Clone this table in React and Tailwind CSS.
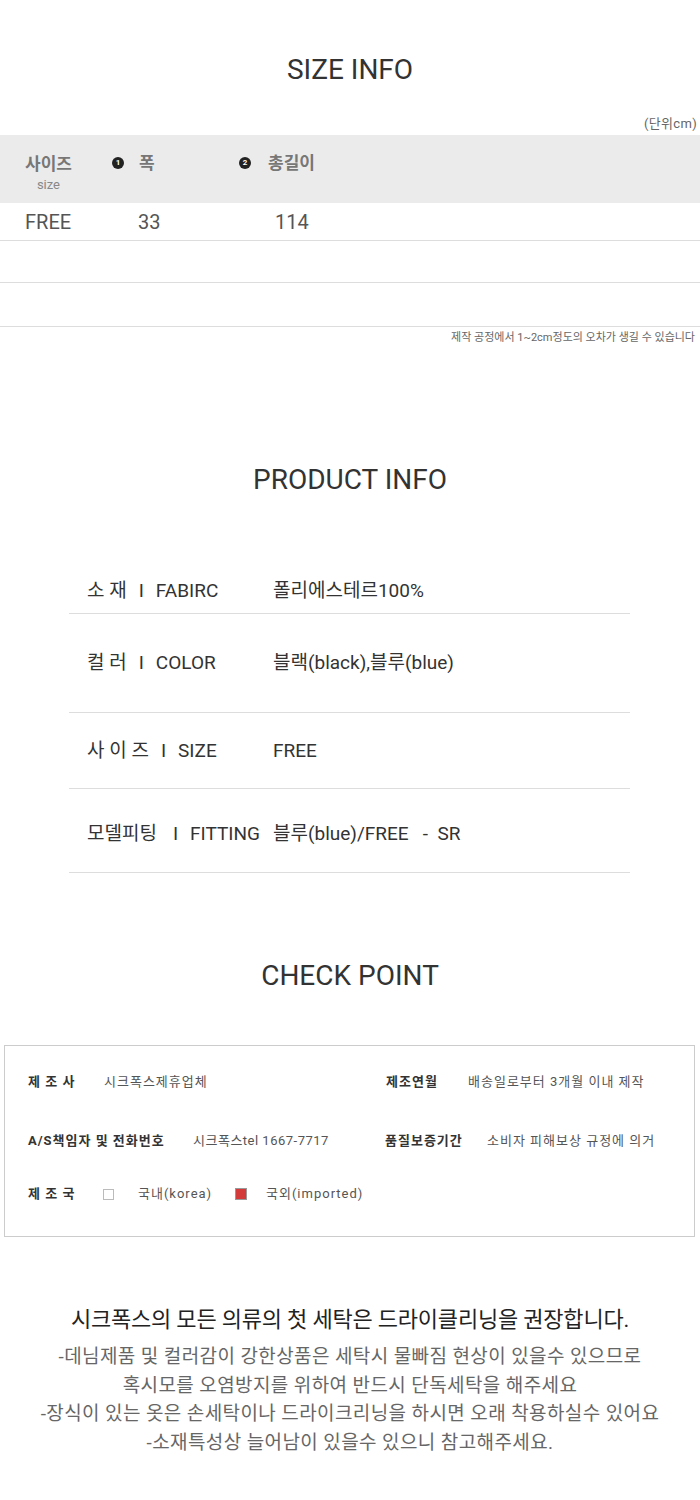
import React from 'react'

const font = { fontFamily: 'Roboto, "Noto Sans CJK KR", sans-serif' }

const Num = ({ n }) => (
  <span className="flex h-3 w-3 items-center justify-center rounded-full bg-[#222] text-[8px] font-bold leading-none text-white">
    {n}
  </span>
)

const productRows = [
  { ko: '소 재', en: 'FABIRC', value: '폴리에스테르100%', cls: 'pt-0 pb-[10px]', sep: 'mx-[12px]' },
  { ko: '컬 러', en: 'COLOR', value: '블랙(black),블루(blue)', cls: 'pt-[37px] pb-[37px]', sep: 'mx-[12px]' },
  { ko: '사 이 즈', en: 'SIZE', value: 'FREE', cls: 'pt-[26px] pb-[25px]', sep: 'mx-[12px]' },
  { ko: '모델피팅', en: 'FITTING', value: '블루(blue)/FREE   -  SR', cls: 'pt-[33px] pb-[26px]', sep: 'ml-[16px] mr-[12px]' },
]

const washLines = [
  '-데님제품 및 컬러감이 강한상품은 세탁시 물빠짐 현상이 있을수 있으므로',
  '혹시모를 오염방지를 위하여 반드시 단독세탁을 해주세요',
  '-장식이 있는 옷은 손세탁이나 드라이크리닝을 하시면 오래 착용하실수 있어요',
  '-소재특성상 늘어남이 있을수 있으니 참고해주세요.',
]

export default function App() {
  return (
    <div className="w-[700px] bg-white pb-10" style={font}>
      {/* SIZE INFO */}
      <h2 className="pt-[53px] text-center text-[28px] leading-[34px] text-[#333]">SIZE INFO</h2>
      <p className="mt-[28px] pr-[3px] text-right text-[13px] leading-[18px] tracking-wide text-[#666]">(단위cm)</p>
      <div className="mt-[2px] flex bg-[#ebebeb] pb-[10px] pt-[18px]">
        <div className="w-[112px] pl-[25px]">
          <div className="inline-flex flex-col items-center">
            <span className="text-[17px] font-semibold leading-[20px] text-[#777]">사이즈</span>
            <span className="mt-[3px] text-[13px] leading-[16px] text-[#888]">size</span>
          </div>
        </div>
        <div className="flex w-[127px] items-start gap-[15px] pt-[4px]">
          <Num n="1" />
          <span className="-mt-[4px] text-[17px] font-semibold leading-[20px] text-[#777]">폭</span>
        </div>
        <div className="flex items-start gap-[17px] pt-[4px]">
          <Num n="2" />
          <span className="-mt-[4px] text-[17px] font-semibold leading-[20px] text-[#777]">총길이</span>
        </div>
      </div>
      <div className="flex h-[38px] items-center border-b border-[#ddd] text-[20px] text-[#555]">
        <span className="w-[138px] pl-[25px]">FREE</span>
        <span className="w-[137px]">33</span>
        <span>114</span>
      </div>
      <div className="h-[42px] border-b border-[#ddd]" />
      <div className="h-[44px] border-b border-[#ddd]" />
      <p className="mt-[4px] pr-[5px] text-right text-[11px] leading-[14px] text-[#666]">
        제작 공정에서 1~2cm정도의 오차가 생길 수 있습니다
      </p>

      {/* PRODUCT INFO */}
      <h2 className="mt-[118px] text-center text-[28px] leading-[34px] text-[#333]">PRODUCT INFO</h2>
      <div className="ml-[69px] mt-[82px] w-[561px]">
        {productRows.map((row) => (
          <div
            key={row.en}
            className={`flex border-b border-[#ddd] pl-[18px] text-[19px] leading-[24px] text-[#333] ${row.cls}`}
          >
            <span className="flex w-[186px]">
              <span className="whitespace-pre">{row.ko}</span>
              <span className={row.sep}>I</span>
              <span>{row.en}</span>
            </span>
            <span className="whitespace-pre">{row.value}</span>
          </div>
        ))}
      </div>

      {/* CHECK POINT */}
      <h2 className="mt-[86px] text-center text-[28px] leading-[34px] text-[#333]">CHECK POINT</h2>
      <div className="ml-[4px] mr-[5px] mt-[52px] border border-[#ccc] pb-[33px] pt-[27px] text-[13px] leading-[18px] tracking-[1px] text-[#555]">
        <div className="flex">
          <div className="flex w-[381px] pl-[23px]">
            <span className="w-[76px] font-bold text-[#333]">제 조 사</span>
            <span>시크폭스제휴업체</span>
          </div>
          <div className="flex">
            <span className="w-[82px] font-bold text-[#333]">제조연월</span>
            <span>배송일로부터 3개월 이내 제작</span>
          </div>
        </div>
        <div className="mt-[41px] flex">
          <div className="flex w-[380px] pl-[23px]">
            <span className="w-[165px] font-bold text-[#333]">A/S책임자 및 전화번호</span>
            <span className="tracking-[0.5px]">시크폭스tel 1667-7717</span>
          </div>
          <div className="flex">
            <span className="w-[102px] font-bold text-[#333]">품질보증기간</span>
            <span>소비자 피해보상 규정에 의거</span>
          </div>
        </div>
        <div className="mt-[35px] flex items-center pl-[23px]">
          <span className="w-[75px] font-bold text-[#333]">제 조 국</span>
          <span className="h-[11px] w-[11px] border border-[#bbb] bg-white" />
          <span className="ml-[24px] w-[97px]">국내(korea)</span>
          <span className="h-[12px] w-[12px] border border-[#999] bg-[#d33a3a]" />
          <span className="ml-[19px]">국외(imported)</span>
        </div>
      </div>

      {/* 세탁 안내 */}
      <div className="mt-[68px] text-center">
        <p className="text-[22px] leading-[30px] tracking-[-0.2px] text-[#222]">
          시크폭스의 모든 의류의 첫 세탁은 드라이클리닝을 권장합니다.
        </p>
        <div className="mt-[8px] text-[19px] leading-[28.5px] tracking-[0.4px] text-[#666]">
          {washLines.map((line) => (
            <p key={line}>{line}</p>
          ))}
        </div>
      </div>
    </div>
  )
}
